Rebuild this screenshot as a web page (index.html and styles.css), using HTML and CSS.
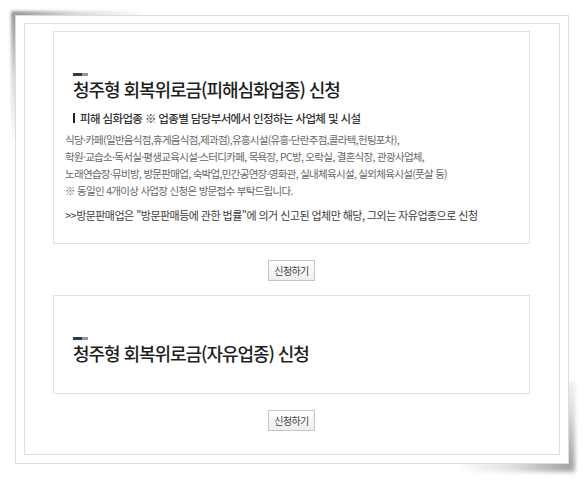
FILE: index.html
```html
<!DOCTYPE html>
<html lang="ko">
<head>
<meta charset="utf-8">
<title>청주형 회복위로금 신청</title>
<link rel="stylesheet" href="styles.css">
</head>
<body>
<div class="frame">
  <div class="inner">
    <section class="card card-first">
      <div class="deco"></div>
      <h2 class="title">청주형 회복위로금(피해심화업종) 신청</h2>
      <p class="sub">피해 심화업종 ※ 업종별 담당부서에서 인정하는 사업체 및 시설</p>
      <div class="desc">
        <p>식당·카페(일반음식점,휴게음식점,제과점),유흥시설(유흥·단란주점,콜라텍,헌팅포차),</p>
        <p>학원·교습소·독서실·평생교육시설·스터디카페, 목욕장, PC방, 오락실, 결혼식장, 관광사업체,</p>
        <p>노래연습장·뮤비방, 방문판매업, 숙박업,민간공연장·영화관, 실내체육시설, 실외체육시설(풋살 등)</p>
        <p>※ 동일인 4개이상 사업장 신청은 방문접수 부탁드립니다.</p>
      </div>
      <p class="note">&gt;&gt;방문판매업은 "방문판매등에 관한 법률"에 의거 신고된 업체만 해당, 그외는 자유업종으로 신청</p>
    </section>
    <div class="btn-row"><button class="btn" type="button">신청하기</button></div>
    <section class="card card-second">
      <div class="deco"></div>
      <h2 class="title">청주형 회복위로금(자유업종) 신청</h2>
    </section>
    <div class="btn-row"><button class="btn" type="button">신청하기</button></div>
  </div>
</div>
</body>
</html>
```
FILE: styles.css
```css
html {
  background: #fff;
}
body {
  margin: 0;
  padding: 15px;
  font-family: "Noto Sans CJK KR", "Noto Sans", sans-serif;
  color: #333;
}
.frame {
  position: relative;
  border: 1px solid #dcdcdc;
  background: #fff;
  padding: 7px 8px 8px;
}
.frame::before {
  content: "";
  position: absolute;
  left: -5px;
  top: -5px;
  width: 130px;
  height: 130px;
  background: radial-gradient(circle at 5px 5px, rgba(0,0,0,0.4), rgba(0,0,0,0.14) 35%, rgba(0,0,0,0) 75%);
  filter: blur(1.5px);
  z-index: -1;
}
.frame::after {
  content: "";
  position: absolute;
  right: -7px;
  bottom: -9px;
  width: 120px;
  height: 90px;
  background: radial-gradient(circle at right 7px bottom 9px, rgba(0,0,0,0.36), rgba(0,0,0,0.12) 40%, rgba(0,0,0,0) 80%);
  filter: blur(2px);
  z-index: -1;
}
.inner {
  border: 1px solid #e0e0e0;
  padding: 7px 29px 23px 28px;
}
.card {
  border: 1px solid #e2e2e2;
  padding: 41px 20px 20px 11px;
}
.card-second {
  padding-bottom: 28px;
}
.deco {
  width: 15px;
  height: 3px;
  margin-left: 8px;
  margin-bottom: 1px;
  background: linear-gradient(90deg, #2c3b4a 0 9px, #8c99a6 9px 15px);
}
.title {
  margin: 0 0 0 8px;
  font-size: 18px;
  line-height: 24px;
  font-weight: 500;
  letter-spacing: -1.05px;
  color: #1e1e1e;
}
.sub {
  margin: 8px 0 0 8px;
  font-size: 11.5px;
  line-height: 18px;
  font-weight: 500;
  letter-spacing: -0.63px;
  color: #333;
  display: flex;
  align-items: center;
}
.sub::before {
  content: "";
  width: 2px;
  height: 10px;
  background: #222;
  margin-right: 5px;
  flex: none;
}
.desc {
  margin-top: 4px;
}
.desc p {
  margin: 0;
  font-size: 10.5px;
  line-height: 17px;
  letter-spacing: -0.7px;
  color: #666;
  white-space: nowrap;
}
.note {
  margin: 8px 0 0;
  font-size: 11px;
  line-height: 17px;
  letter-spacing: -0.54px;
  color: #3c3c3c;
  white-space: nowrap;
}
.card-first {
  padding-bottom: 19px;
}
.btn-row {
  display: flex;
  justify-content: center;
  margin-top: 16px;
  margin-bottom: 14px;
}
.btn-row:last-child {
  margin-bottom: 0;
}
.btn {
  width: 47px;
  height: 21px;
  padding: 0;
  border: 1px solid #c4c4c4;
  background: linear-gradient(#ffffff, #eeeeee);
  font-family: "Noto Sans CJK KR", sans-serif;
  font-size: 10px;
  letter-spacing: -0.6px;
  color: #444;
  line-height: 19px;
}
```
